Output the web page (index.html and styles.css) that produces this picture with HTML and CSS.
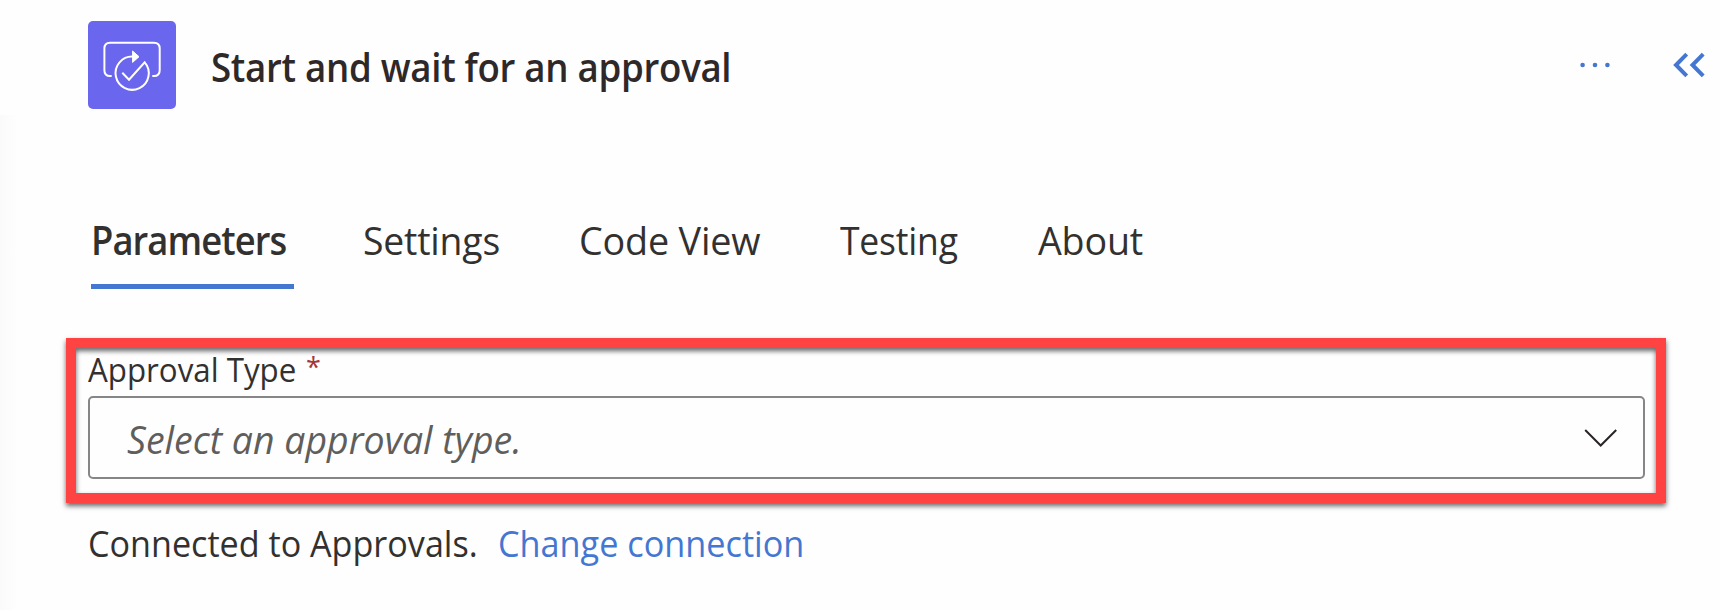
FILE: index.html
```
<!DOCTYPE html>
<html lang="en">
<head>
<meta charset="utf-8">
<title>Start and wait for an approval</title>
<link rel="stylesheet" href="styles.css">
</head>
<body>
<main class="panel">
  <header class="header">
    <svg class="app-icon" viewBox="0 0 88 88" fill="none" stroke="#fff" stroke-width="2">
      <path d="M23.7 55H22Q16.4 55 16.4 49.2V27.6Q16.4 21.8 22 21.8H66Q71.7 21.8 71.7 27.6V49.2Q71.7 55 66 55H64.3"/>
      <path d="M45 35.6A16.6 16.6 0 1 0 56.7 41.3L41 58.7L34.3 51.7"/>
      <path d="M44.6 30V41.4L51 35.7Z" fill="#fff" stroke-width="1"/>
    </svg>
    <h1 class="title"><span class="text">Start and wait for an approval</span></h1>
    <button class="icon-button" aria-label="More">
      <svg width="30" height="8" viewBox="0 0 30 8" fill="#4477d1"><circle cx="2.6" cy="4" r="2.3"/><circle cx="15" cy="4" r="2.3"/><circle cx="27.4" cy="4" r="2.3"/></svg>
    </button>
    <button class="icon-button collapse" aria-label="Collapse">
      <svg width="34" height="28" viewBox="0 0 34 28" fill="none" stroke="#4477d1" stroke-width="4"><path d="M14.7 3.2L4 14L14.7 24.8M31.2 3.2L20.5 14L31.2 24.8"/></svg>
    </button>
  </header>
  <nav class="tabs">
    <a class="tab active"><span class="text">Parameters</span></a>
    <a class="tab settings"><span class="text">Settings</span></a>
    <a class="tab code"><span class="text">Code View</span></a>
    <a class="tab testing"><span class="text">Testing</span></a>
    <a class="tab about"><span class="text">About</span></a>
  </nav>
  <section class="highlight">
    <div class="label"><span class="label-text text">Approval Type</span><span class="required">*</span></div>
    <div class="select">
      <span class="placeholder text">Select an approval type.</span>
      <svg width="34" height="20" viewBox="0 0 34 20" fill="none" stroke="#2b2426" stroke-width="2"><path d="M1.2 2L16.7 17.5L32.2 2"/></svg>
    </div>
  </section>
  <footer class="connection">
    <div class="status"><span class="text">Connected to Approvals.</span></div>
    <a class="change text">Change connection</a>
  </footer>
</main>
</body>
</html>
```
FILE: styles.css
```
* { box-sizing: border-box; }
body { margin: 0; background: #fefefe; font-family: "Open Sans", "Noto Sans", sans-serif; color: #323130; }
.panel { height: 610px; padding-top: 21px; overflow: hidden; white-space: nowrap; background: linear-gradient(90deg, #fafafa, #fefefe) 0 115px / 18px 495px no-repeat; }

/* Condensed lettering */
.text { display: inline-block; transform: scaleX(var(--condense, .948)); transform-origin: 0 50%; }

.header { display: flex; height: 88px; padding-left: 88px; }
.app-icon { flex: none; width: 88px; height: 88px; border-radius: 5px; background: #6a66ee; }
.title { --condense: .939; width: 1368px; margin: 20px 0 0; padding-left: 35px; font-size: 39px; line-height: 52px; font-weight: 600; letter-spacing: -.3px; color: #2f2829; }
.icon-button { display: flex; align-items: center; height: 87px; margin-left: 36px; padding: 0; border: 0; background: none; }
.collapse { margin-left: 62px; }
.tabs { display: flex; height: 76px; margin: 104px 0 0 91px; font-size: 39px; line-height: 54px; }
.tab { flex: none; letter-spacing: -.2px; }
.active { --condense: .932; width: 203px; border-bottom: 5px solid #4477d1; font-weight: 600; letter-spacing: -1px; }
.settings { --condense: .958; width: 216px; margin-left: 69px; }
.code { --condense: .968; width: 261px; }
.testing { --condense: .91; width: 198px; }
.about { --condense: .965; }
.highlight { width: 1600px; height: 165px; margin: 49px 0 0 66px; padding: 0 11px 0 12px; border: 10px solid #ff4242; box-shadow: 0 3px 5px rgba(0,0,0,.6), inset 0 3px 5px rgba(0,0,0,.6); }
.label { display: flex; height: 48px; font-size: 33px; line-height: 44px; }
.label-text { width: 218px; }
.required { font-size: 27px; line-height: 38px; color: #a4373a; }
.select { display: flex; justify-content: space-between; align-items: center; height: 83px; padding: 0 25px 0 37px; border: 2px solid #868686; border-radius: 5px; background: #fefefe; }
.placeholder { --condense: .961; padding-top: 3px; font-size: 39px; line-height: 52px; font-style: italic; color: #605e5c; }
.connection { display: flex; margin: 17px 0 0 88px; font-size: 36px; line-height: 48px; }
.status { flex: none; width: 410px; }
.change { --condense: .951; color: #4477d1; }
```
